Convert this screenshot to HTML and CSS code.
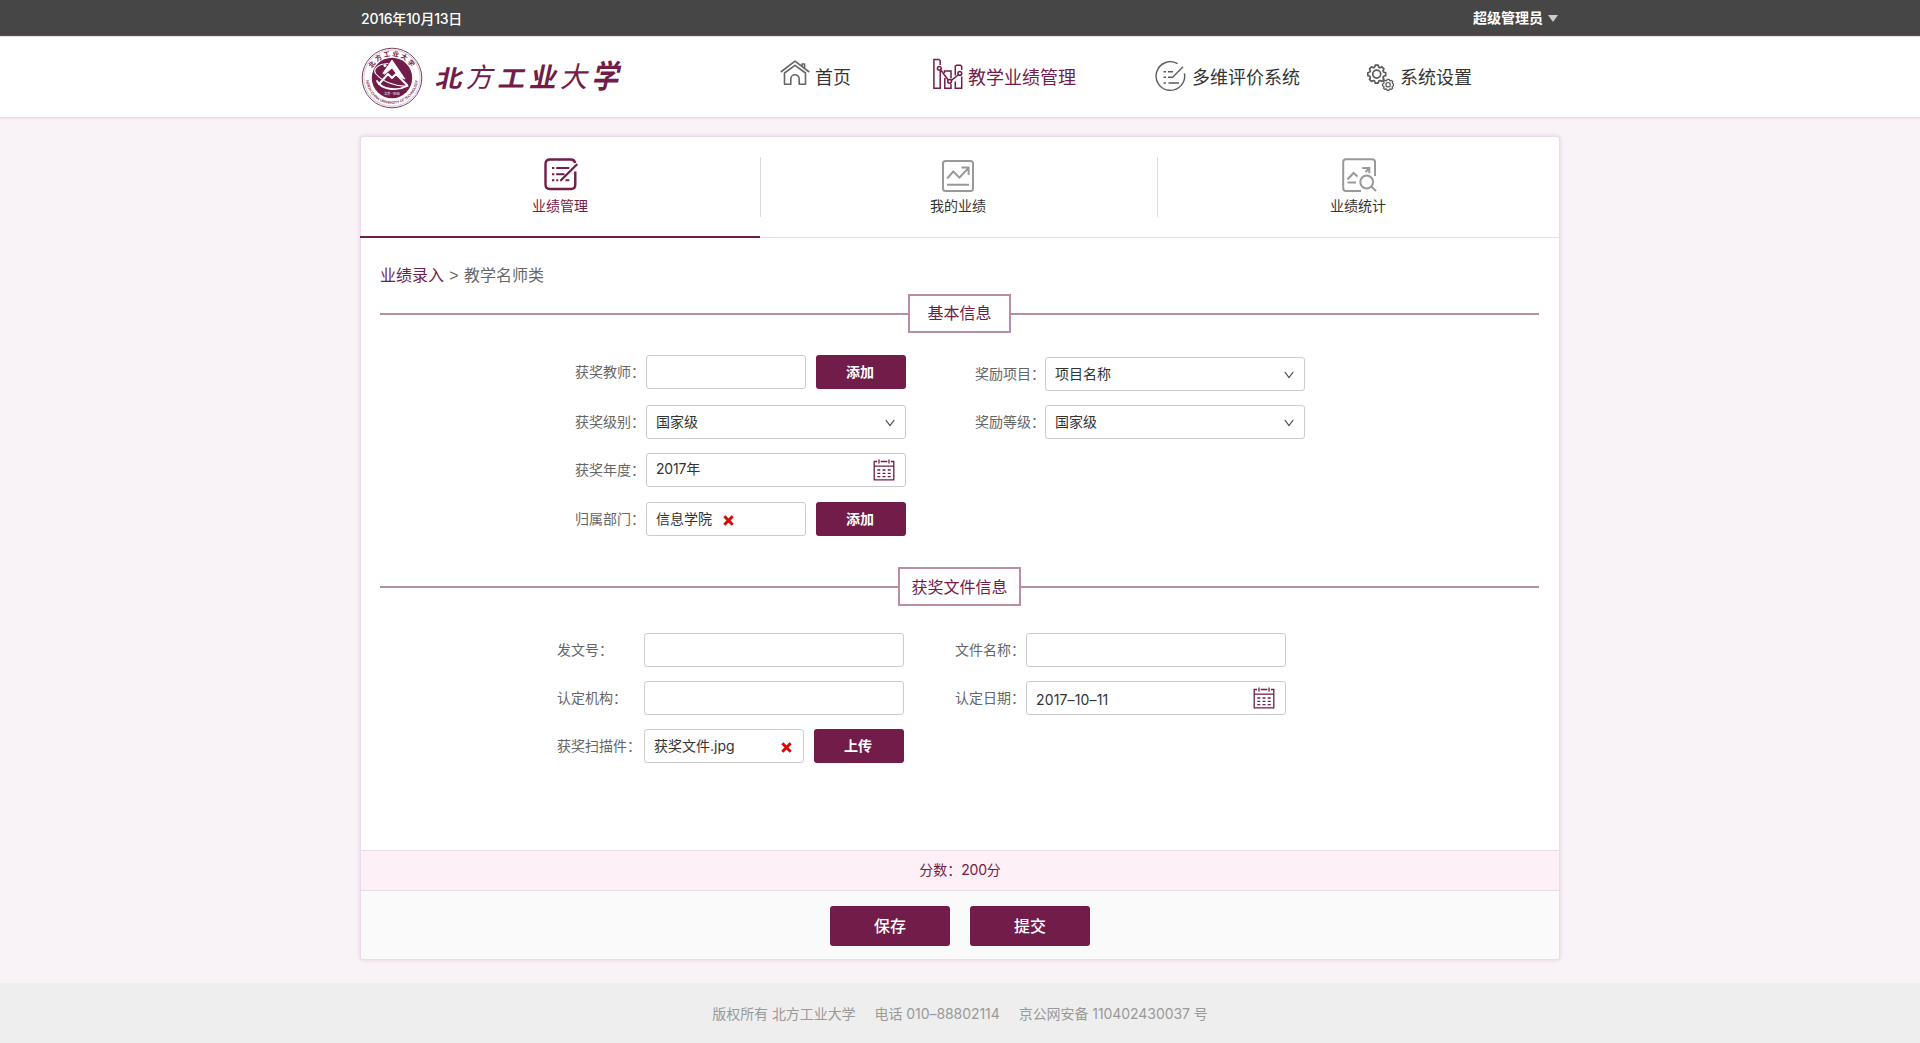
FILE: index.html
```html
<!DOCTYPE html>
<html lang="zh-CN">
<head>
<meta charset="utf-8">
<title>教学业绩管理 - 北方工业大学</title>
<link rel="stylesheet" href="styles.css">
</head>
<body>
<div class="topbar"><div class="wrap topbar-in">
  <span class="date">2016年10月13日</span>
  <span class="user">超级管理员<i class="caret"></i></span>
</div></div>

<header class="header"><div class="wrap header-in">
  <a class="brand">
    <svg class="emblem" width="62" height="62" viewBox="0 0 62 62">
      <defs>
        <path id="arcTop" d="M10.5 37 A21.5 21.5 0 1 1 51.5 37"/>
        <path id="arcBottom" d="M5.3 27 A26 26 0 1 0 56.7 27"/>
      </defs>
      <circle cx="31" cy="31" r="29.8" fill="#fff" stroke="#7d4263" stroke-width="1"/>
      <circle cx="31" cy="31" r="28.2" fill="none" stroke="#b48ba2" stroke-width=".5"/>
      <circle cx="31" cy="31" r="20.2" fill="#721c4a"/>
      <text class="seal-cn"><textPath href="#arcTop" startOffset="50%" text-anchor="middle">北方工业大学</textPath></text>
      <text class="seal-en"><textPath href="#arcBottom" startOffset="50%" text-anchor="middle">NORTH CHINA UNIVERSITY OF TECHNOLOGY</textPath></text>
      <g fill="none" stroke="#fff" stroke-linecap="round" stroke-linejoin="round">
        <path d="M22 26 L31 13 L44 32 L38 30 L31 21 L24 27Z" fill="#fff" stroke-width=".8"/>
        <path d="M18 37 L27 27 L31 31 L35 27 L46 38" stroke-width="2"/>
        <path d="M27 16.5 C17 17 11 22 15 27 C21 34 34 40 47 39" stroke-width="1.1"/>
        <path d="M16 34 C20 42 35 45 46 39" stroke-width="1.8"/>
      </g>
      <circle cx="24" cy="18.5" r="1.5" fill="#fff"/>
      <text class="seal-small" x="31" y="47.5" text-anchor="middle">北京 · 1946</text>
    </svg>
    <span class="brand-name"><b>北</b><b>方</b><b>工</b><b>业</b><b>大</b><b>学</b></span>
  </a>
  <nav class="nav">
    <a class="nav-item home">
      <svg width="30" height="26" viewBox="0 0 30 26" fill="none" stroke="#666" stroke-width="1.6" stroke-linejoin="round"><path d="M.8 12 L15 1.2 L29.2 12"/><path d="M4.5 13 L15 5.3 L25.5 13 V24.2 H19.2 V19 a4.2 4.2 0 0 0-8.4 0 V24.2 H4.5Z"/><path d="M22 6 V4 H24.6 V8.2"/></svg>
      <span>首页</span></a>
    <a class="nav-item teach">
      <svg width="30" height="32" viewBox="0 0 30 32" fill="none" stroke="#721c4a" stroke-width="1.5"><path d="M7.2 7 V2.5 L5.8 1.4 H.9 V30.2 H7.2 V13"/><path d="M11.4 15 V13 H18 V20.5 M11.8 20 V30.2 H18 V26"/><path d="M22.3 17.5 V8.2 L23.6 7.2 H27.5 L28.7 8.5 V12 M28.7 18.5 V30.2 H22.3 V23.5"/><path d="M7.8 12 L15 21.8 M18.3 22.3 L25.2 17"/><circle cx="6.3" cy="10.3" r="1.9"/><circle cx="16.6" cy="23.3" r="1.9"/><circle cx="26.8" cy="15.4" r="1.9"/></svg>
      <span>教学业绩管理</span></a>
    <a class="nav-item multi">
      <svg width="31" height="31" viewBox="0 0 31 31" fill="none" stroke="#5d5d5d" stroke-width="1.4"><path d="M22.6 2.7 A14.3 14.3 0 1 0 29.4 12.3"/><path d="M8.5 10.8 H11 M13 10.8 H18 M8.5 16.3 H11 M13 16.3 H17 M8.5 22 H11 M13.5 22 H24 M17.2 16.8 L28 5.8"/></svg>
      <span>多维评价系统</span></a>
    <a class="nav-item sys">
      <svg width="27" height="27" viewBox="0 0 27 27" fill="none" stroke="#5b5b5b" stroke-linejoin="round"><path stroke-width="1.7" d="M8.2 1.2h3l.6 2.1 1.1.5 2-.9 2 2-.9 2 .5 1.1 2.2.7v2.9l-2.2.7-.5 1.1.9 2-2 2-2-.9-1.1.5-.6 2.1h-3l-.6-2.1-1.1-.5-2 .9-2-2 .9-2-.5-1.1-2.1-.7V8.7l2.1-.7.5-1.1-.9-2 2-2 2 .9 1.1-.5z"/><circle cx="9.7" cy="10.1" r="4" stroke-width="1.7"/><path stroke-width="1.2" d="M20.2 15.3h2l.4 1.3.8.3 1.2-.6 1.2 1.3-.6 1.2.4.8 1 .4v1.8l-1.2.5-.3.7.5 1.2-1.2 1.3-1.2-.6-.8.3-.4 1.2h-1.7l-.5-1.2-.8-.3-1.2.5-1.3-1.3.6-1.1-.3-.8-1.3-.5v-1.7l1.3-.5.3-.7-.6-1.2 1.3-1.3 1.2.6.8-.3z"/><circle cx="21.1" cy="20.7" r="2.2" stroke-width="1.2"/></svg>
      <span>系统设置</span></a>
  </nav>
</div></header>

<main class="card">
  <div class="tabs">
    <a class="tab active">
      <svg width="34" height="33" viewBox="0 0 34 33" fill="none" stroke="#721c4a"><path stroke-width="2.4" d="M31.2 5 C30.6 2.6 29 1.5 27 1.5 H6 Q1.5 1.5 1.5 6 V26.5 Q1.5 31 6 31 H27 Q31.3 31 31.3 26.5 V13.5"/><path stroke-width="2" d="M8 10 H10.3 M12.2 10 H25.3 M8 16.2 H10.3 M12.2 16.2 H20.5 M8 22.3 H10.3 M12.2 22.3 H14.2 M21.5 22.3 H25.3"/><path stroke-width="2.3" stroke-linecap="round" d="M17 22.3 L32.6 6.8"/></svg>
      <span>业绩管理</span></a>
    <a class="tab mine">
      <svg width="32" height="32" viewBox="0 0 32 32" fill="none" stroke="#999" stroke-width="2"><rect x="1" y="1" width="30" height="30" rx="2.5"/><path d="M5.2 18.5 L11.3 11.5 L17.4 17.6 L26 8.5 M19.5 7.5 H26.6 V15 M5 24.8 H27"/></svg>
      <span>我的业绩</span></a>
    <a class="tab stats">
      <svg width="35" height="34" viewBox="0 0 35 34" fill="none" stroke="#999" stroke-width="2"><path d="M33 18 V4 Q33 1.3 30.2 1.3 H4 Q1.2 1.3 1.2 4 V30.2 Q1.2 33 4 33 H19"/><path d="M5.5 21.5 L11.5 15 L15.5 18.5 M5.5 24.5 H14 M20.2 10 H27.3 V15.2 M27 10.5 L23.5 14"/><circle cx="24.7" cy="24" r="6.4"/><path d="M29.3 28.5 L34 33"/></svg>
      <span>业绩统计</span></a>
  </div>

  <p class="crumbs"><a>业绩录入</a> <span class="gt">&gt;</span> 教学名师类</p>

  <h2 class="section"><span>基本信息</span></h2>
  <div class="form basic">
    <div class="col">
      <div class="row r1"><label>获奖教师：</label><div class="input short"></div><button>添加</button></div>
      <div class="row r2"><label>获奖级别：</label><div class="input"><span>国家级</span><svg class="chev" viewBox="0 0 10 8"><path d="M.8 1 L5 6.5 L9.2 1"/></svg></div></div>
      <div class="row r3"><label>获奖年度：</label><div class="input"><span class="year">2017年</span><svg class="cal" viewBox="0 0 22 22"><path d="M4 2.5 H1.2 V20.8 H20.8 V2.5 H18 M7.7 2.5 H14.3 M1 7.2 H21"/><path d="M6 .4 V4.5 M16 .4 V4.5"/><path d="M4.3 11 H7.3 M9.5 11 H12.5 M14.7 11 H17.7 M4.3 14.3 H7.3 M9.5 14.3 H12.5 M14.7 14.3 H17.7 M4.3 17.6 H7.3 M9.5 17.6 H12.5 M14.7 17.6 H17.7"/></svg></div></div>
      <div class="row"><label>归属部门：</label><div class="input short tag"><span>信息学院</span><svg class="del" viewBox="0 0 10 10"><path d="M1.2 1.2 L8.8 8.8 M8.8 1.2 L1.2 8.8"/></svg></div><button>添加</button></div>
    </div>
    <div class="col second">
      <div class="row r2"><label>奖励项目：</label><div class="input"><span>项目名称</span><svg class="chev" viewBox="0 0 10 8"><path d="M.8 1 L5 6.5 L9.2 1"/></svg></div></div>
      <div class="row"><label>奖励等级：</label><div class="input"><span>国家级</span><svg class="chev" viewBox="0 0 10 8"><path d="M.8 1 L5 6.5 L9.2 1"/></svg></div></div>
    </div>
  </div>

  <h2 class="section"><span class="wide">获奖文件信息</span></h2>
  <div class="form files">
    <div class="col">
      <div class="row r2"><label>发文号：</label><div class="input"></div></div>
      <div class="row r2"><label>认定机构：</label><div class="input"></div></div>
      <div class="row"><label>获奖扫描件：</label><div class="input short"><span>获奖文件.jpg</span><svg class="del" viewBox="0 0 10 10"><path d="M1.2 1.2 L8.8 8.8 M8.8 1.2 L1.2 8.8"/></svg></div><button>上传</button></div>
    </div>
    <div class="col second">
      <div class="row r2"><label>文件名称：</label><div class="input"></div></div>
      <div class="row"><label>认定日期：</label><div class="input"><span class="day">2017–10–11</span><svg class="cal" viewBox="0 0 22 22"><path d="M4 2.5 H1.2 V20.8 H20.8 V2.5 H18 M7.7 2.5 H14.3 M1 7.2 H21"/><path d="M6 .4 V4.5 M16 .4 V4.5"/><path d="M4.3 11 H7.3 M9.5 11 H12.5 M14.7 11 H17.7 M4.3 14.3 H7.3 M9.5 14.3 H12.5 M14.7 14.3 H17.7 M4.3 17.6 H7.3 M9.5 17.6 H12.5 M14.7 17.6 H17.7"/></svg></div></div>
    </div>
  </div>

  <div class="score">分数：<span>200</span>分</div>
  <div class="actions"><button>保存</button><button>提交</button></div>
</main>

<footer class="footer"><span>版权所有 北方工业大学</span><span>电话 010–88802114</span><span>京公网安备 110402430037 号</span></footer>
</body>
</html>
```
FILE: styles.css
```css
* { box-sizing: border-box; }
body {
  margin: 0;
  height: 1043px;
  overflow: hidden;
  background: #f9f2f7;
  color: #333;
  font: 14px/20px Inter, "Noto Sans CJK SC", sans-serif;
}
svg { display: block; flex: none; }
button {
  border: 0;
  border-radius: 3px;
  background: #721c4a;
  color: #fff;
  font: inherit;
  font-weight: 600;
  padding: 0;
}
.wrap { width: 1200px; margin: 0 auto; }

.topbar { height: 36px; background: #464646; color: #fff; }
.topbar-in { display: flex; justify-content: space-between; padding: 0 2px 0 1px; }
.date { line-height: 38px; font-weight: 500; letter-spacing: -.25px; }
.user { display: flex; align-items: center; gap: 5px; height: 36px; font-weight: 700; }
.caret { border: 5px solid transparent; border-top: 7px solid #ccc; border-bottom: 0; }

.header { height: 82px; background: #fff; border-top: 1px solid #ecdbe8; border-bottom: 1px solid #ecdbe8; box-shadow: 0 1px 2px #f0e3ed; }
.header-in { display: flex; }
.brand { display: flex; width: 420px; padding: 10px 0 0 1px; }
.brand-name { display: flex; gap: 4.4px; margin: 13px 0 0 12px; color: #721c4a; font-size: 27px; line-height: 36px; transform: skewX(-12deg); }
.brand-name b { width: 27px; }
.brand-name b:nth-child(odd) { transform: scaleY(.88); }
.brand-name b:nth-child(2) { font-weight: 400; }
.brand-name b:nth-child(5) { font-weight: 400; transform: scaleY(1.05); }
.brand-name b:nth-child(6) { transform: scaleY(1.2); }
.seal-cn { fill: #721c4a; font-size: 6.6px; font-weight: 700; letter-spacing: 1.6px; }
.seal-en { fill: #721c4a; font-size: 3.6px; font-weight: 600; letter-spacing: -.1px; }
.seal-small { fill: #fff; font-size: 3px; }
.nav { display: flex; font-size: 18px; line-height: 28px; }
.nav-item { display: flex; gap: 5px; align-items: flex-start; }
.nav-item span { margin-top: 27px; white-space: nowrap; }
.home svg { margin-top: 23px; }
.teach { margin-left: 82px; color: #721c4a; }
.teach svg { margin-top: 21px; }
.multi { margin-left: 79px; gap: 6px; }
.multi svg { margin-top: 24px; }
.sys { margin-left: 67px; gap: 6px; }
.sys svg { margin-top: 27px; }

.card {
  width: 1200px;
  height: 824px;
  margin: 18px auto 23px;
  border: 1px solid #ecdbe8;
  border-radius: 3px;
  background: #fff;
  box-shadow: 0 0 3px 1px #ecdbe8;
}
.tabs { display: grid; grid-template-columns: 399px 397px 402px; height: 101px; border-bottom: 1px solid #e1e1e1; }
.tab { display: flex; flex-direction: column; align-items: center; position: relative; height: 101px; padding-top: 21px; }
.tab span { margin-top: 4px; }
.tab + .tab::before { content: ""; position: absolute; left: 0; top: 20px; height: 60px; border-left: 1px solid #ddd; }
.active { color: #721c4a; border-bottom: 2px solid #721c4a; margin-left: -1px; }
.active svg { margin-left: 2px; }
.active span { margin-top: 5px; }
.mine { padding-top: 23px; padding-right: 1px; }
.stats svg { margin-left: 2px; }

.crumbs { margin: 25px 0 0 19px; font-size: 16px; line-height: 24px; color: #666; word-spacing: .8px; }
.crumbs a { color: #721c4a; }
.gt { font-family: "Liberation Sans", sans-serif; }
.section { display: flex; align-items: center; margin: 6px 20px 0 19px; font-size: 16px; font-weight: 400; line-height: 35px; color: #721c4a; }
.section::before, .section::after { content: ""; flex: 1; height: 2px; background: #ba8da4; }
.section span { width: 103px; height: 39px; border: 2px solid #ba8da4; text-align: center; }
.section .wide { width: 123px; line-height: 37px; }

.form { display: flex; }
.basic { height: 228px; padding: 22px 0 0 214px; }
.basic .col { width: 400px; }
.basic .second { padding-top: 2px; }
.basic label { width: 71px; }
.basic .second label { width: 70px; }
.row { display: flex; align-items: center; height: 34px; }
.r1 { margin-bottom: 16px; }
.r2 { margin-bottom: 14px; }
.r3 { margin-bottom: 15px; }
label { color: #666; white-space: nowrap; }
.input { display: flex; align-items: center; justify-content: space-between; width: 260px; height: 34px; padding: 0 10px 0 9px; border: 1px solid #ccc; border-radius: 3px; background: #fff; }
.short { width: 160px; padding-right: 11px; }
.short + button { width: 90px; height: 34px; margin-left: 10px; padding-right: 2px; }
.tag { justify-content: flex-start; gap: 11px; }
.chev { width: 10px; height: 8px; margin-top: 2px; fill: none; stroke: #444; stroke-width: 1.2; }
.cal { width: 22px; height: 22px; fill: none; stroke: #721c4a; stroke-width: 1.3; }
.del { width: 11px; height: 11px; margin-top: 2px; fill: none; stroke: #d60a0a; stroke-width: 2.7; }
.files { height: 244px; padding: 27px 0 0 196px; }
.files .col { width: 398px; }
.files label { width: 87px; }
.files .second label { width: 71px; }
.year { letter-spacing: -.2px; margin-top: -2px; }
.day { padding-top: 3px; letter-spacing: .15px; }

.score { height: 41px; border: 1px solid #ecdbe8; border-width: 1px 0; background: #fdf0f7; color: #721c4a; line-height: 38px; text-align: center; }
.score span { letter-spacing: -.2px; }
.actions { display: flex; justify-content: center; gap: 20px; height: 68px; padding-top: 15px; border-radius: 0 0 2px 2px; background: #fafafa; }
.actions button { width: 120px; height: 40px; padding-bottom: 1px; font-size: 16px; font-weight: 500; }

.footer { display: flex; justify-content: center; gap: 19px; height: 60px; background: #eee; color: #999; line-height: 62px; letter-spacing: -.06px; }
```
